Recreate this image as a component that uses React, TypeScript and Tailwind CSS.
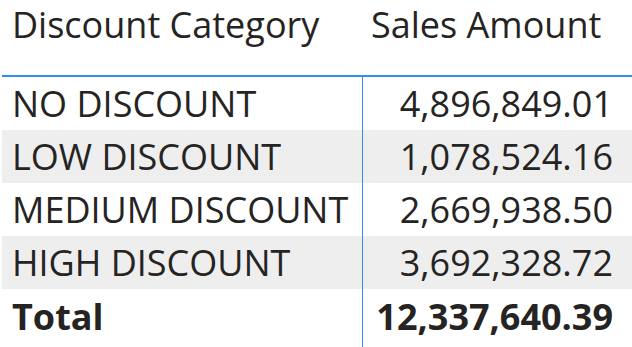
const rows = [
  { name: "NO DISCOUNT", amount: "4,896,849.01" },
  { name: "LOW DISCOUNT", amount: "1,078,524.16" },
  { name: "MEDIUM DISCOUNT", amount: "2,669,938.50" },
  { name: "HIGH DISCOUNT", amount: "3,692,328.72" },
];

export default function App() {
  return (
    <div className="w-[632px] h-[347px] overflow-hidden bg-white pl-[2px] text-[#252423] font-['Open_Sans',sans-serif] text-[36px]">
      <div className="flex h-[77px] border-b-2 border-[#2f8ff0]">
        <div className="w-[361px] pl-[10px] pt-[7px] leading-[36px]">Discount Category</div>
        <div className="flex-1 pl-[8px] pt-[7px] leading-[36px]">Sales Amount</div>
      </div>
      {rows.map((r, i) => (
        <div key={r.name} className={`flex h-[53px] ${i % 2 === 1 ? "bg-[#eeeeee]" : ""}`}>
          <div className="w-[361px] pl-[10px] leading-[53px] border-r border-[#2f8ff0] whitespace-nowrap">
            {r.name}
          </div>
          <div className="flex-1 pr-[19px] text-right leading-[53px]">{r.amount}</div>
        </div>
      ))}
      <div className="flex h-[60px] font-bold">
        <div className="w-[361px] pl-[10px] leading-[55px] border-r border-[#2f8ff0]">Total</div>
        <div className="flex-1 pr-[19px] text-right leading-[55px]">12,337,640.39</div>
      </div>
    </div>
  );
}
